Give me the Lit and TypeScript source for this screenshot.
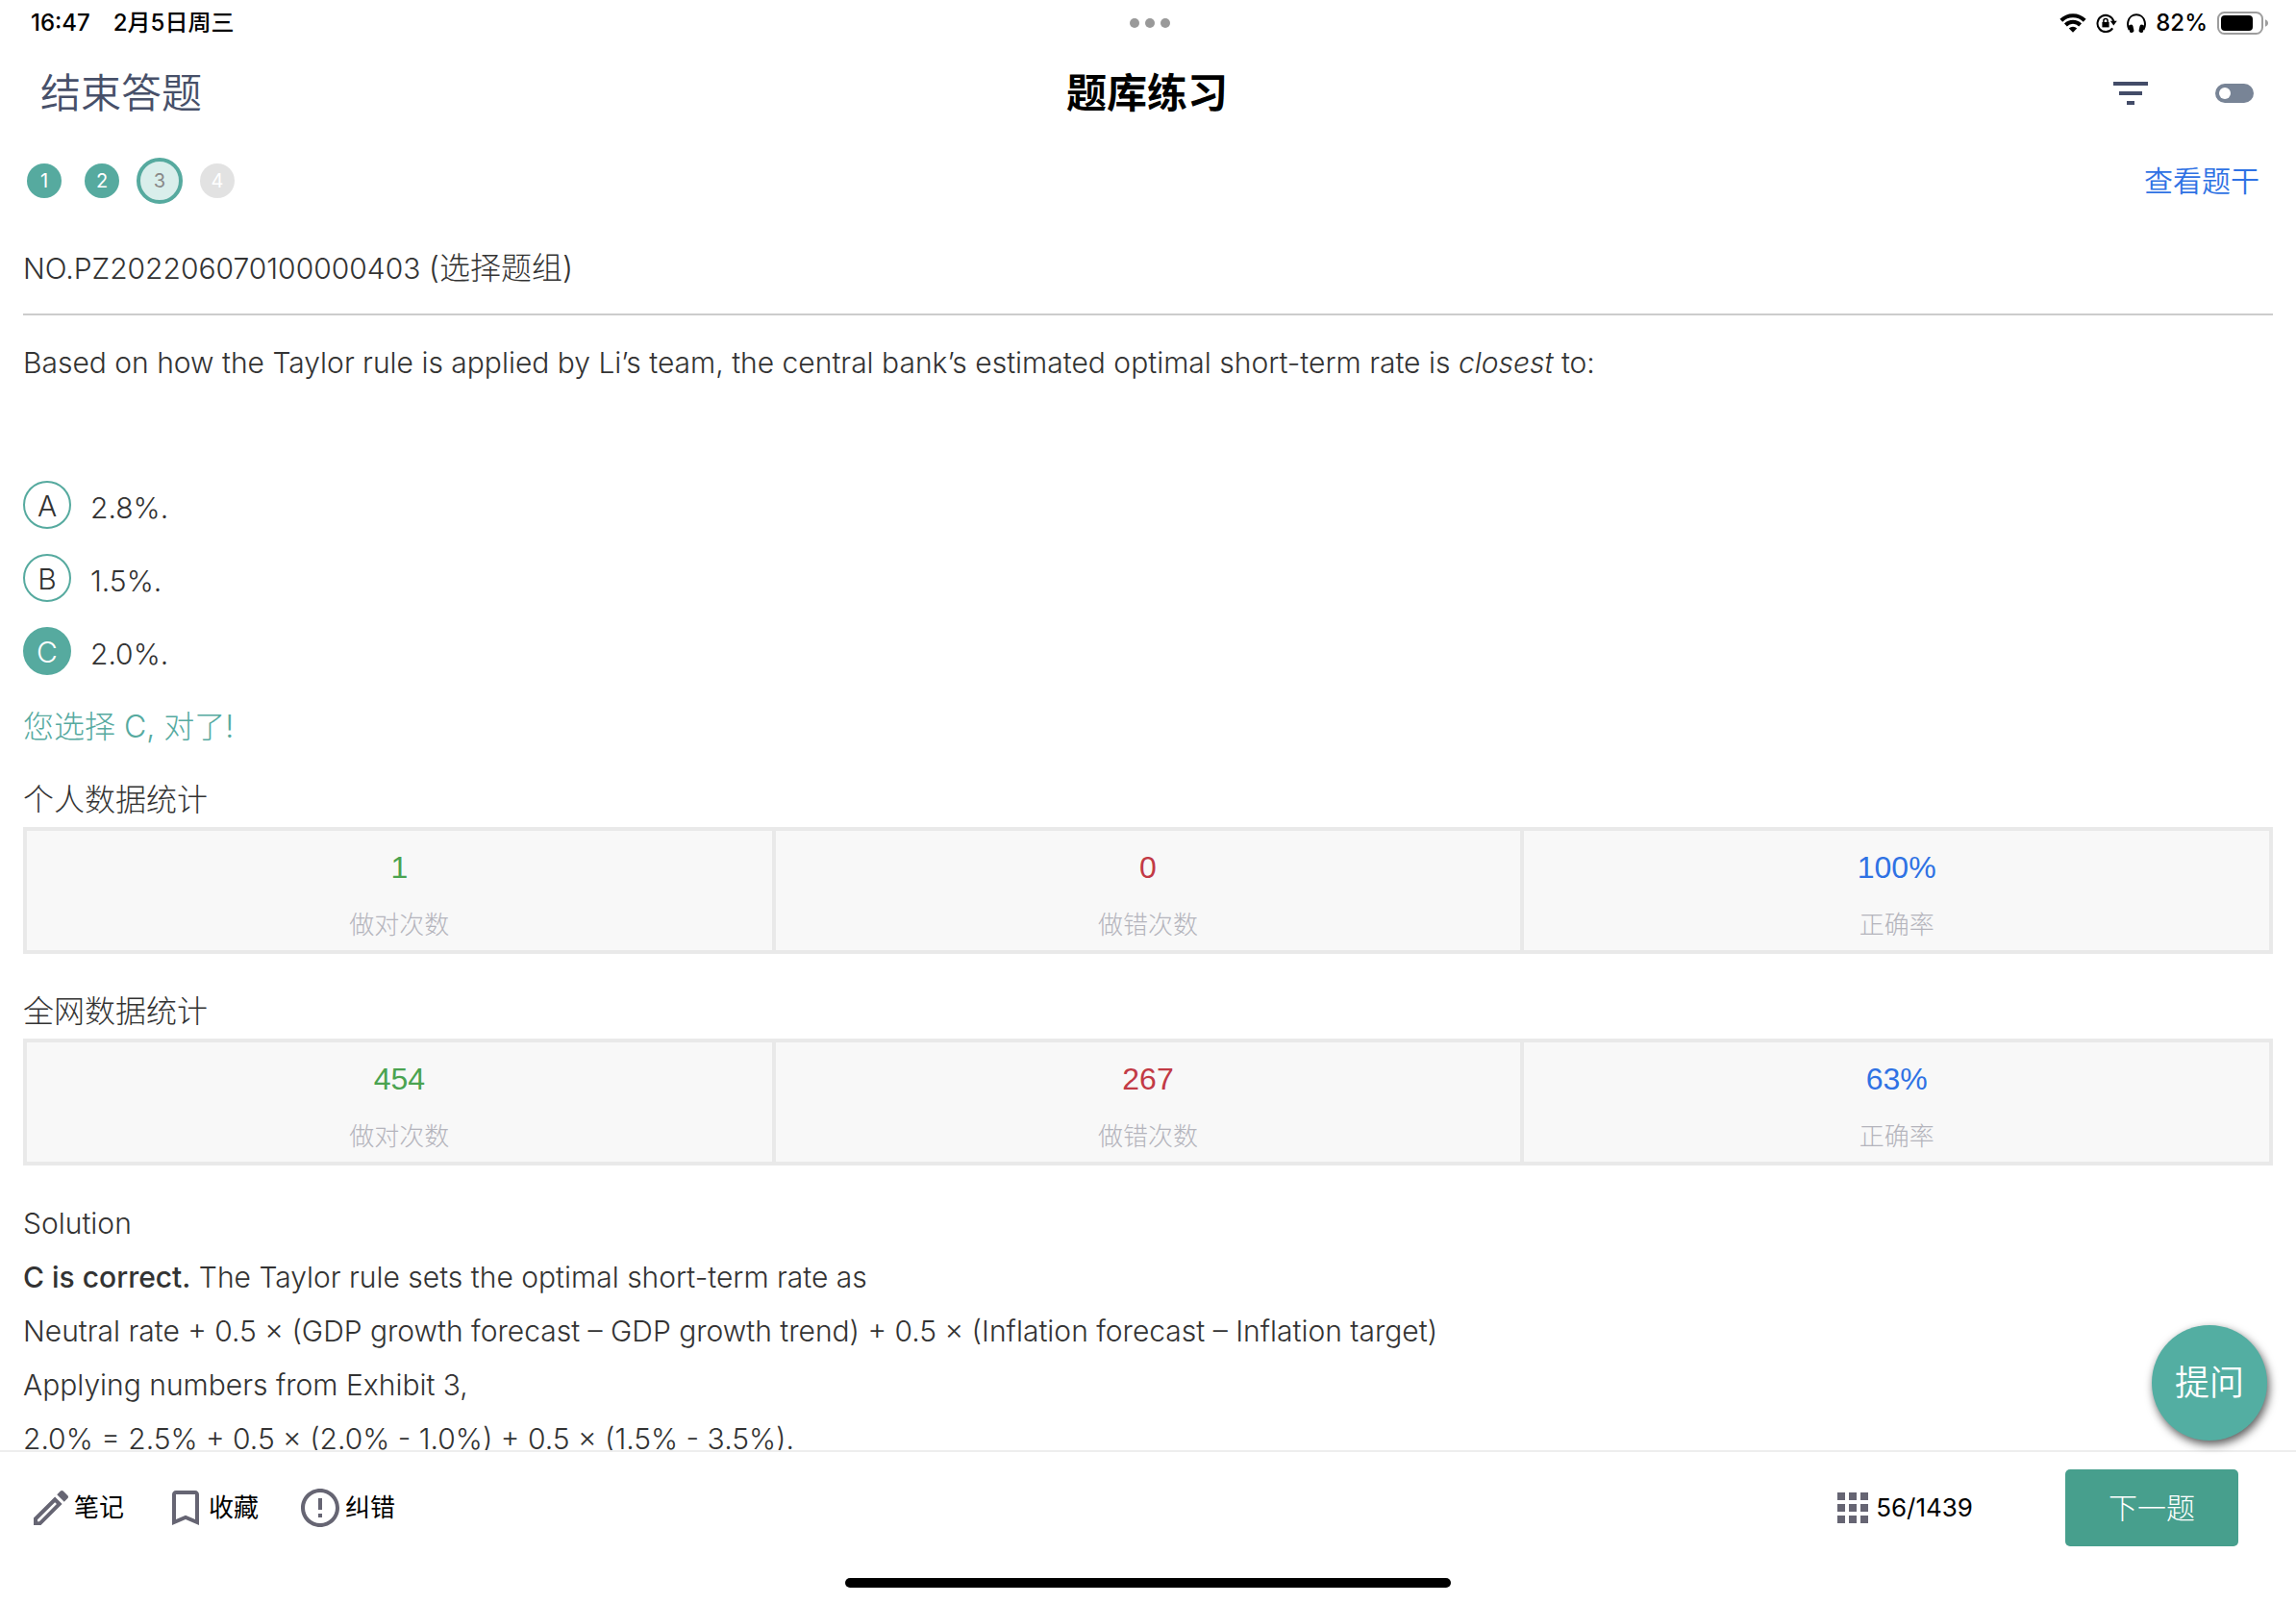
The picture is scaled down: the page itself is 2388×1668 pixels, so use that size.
import { LitElement, html, css, svg } from "lit";
import { customElement, property, state } from "lit/decorators.js";
import { classMap } from "lit/directives/class-map.js";

const wifiIcon = svg`<svg width="28" height="22" viewBox="0 0 28 22" aria-hidden="true">
  <g fill="none" stroke="#000" stroke-width="4">
    <path d="M1.8 8.2a17.4 17.4 0 0 1 24.4 0" />
    <path d="M6.4 13a10.8 10.8 0 0 1 15.2 0" />
  </g>
  <path d="M9.8 16.4a6 6 0 0 1 8.4 0L14 20.8z" />
</svg>`;

const rotationLockIcon = svg`<svg width="22" height="22" viewBox="0 0 22 22" aria-hidden="true">
  <path d="M18.4 9.2A8.6 8.6 0 1 0 17.2 16.4" fill="none" stroke="#000" stroke-width="2" />
  <path d="M14.8 8.8h7l-3.5 4.8z" />
  <path d="M6.4 10h7.2v5.4H6.4z" />
  <path d="M7.9 10.4V8.6a2.1 2.1 0 0 1 4.2 0v1.8" fill="none" stroke="#000" stroke-width="1.5" />
</svg>`;

const headphonesIcon = svg`<svg width="20" height="22" viewBox="0 0 20 22" aria-hidden="true">
  <path d="M2.6 18C.6 14.6.9 11.3 1.4 9.2a8.8 8.8 0 0 1 17.2 0c.5 2.1.8 5.4-1.2 8.8" fill="none" stroke="#000" stroke-width="2" />
  <rect x="2.4" y="12.6" width="4.6" height="8.4" rx="2" transform="rotate(-12 4.7 16.8)" />
  <rect x="13" y="12.6" width="4.6" height="8.4" rx="2" transform="rotate(12 15.3 16.8)" />
</svg>`;

const batteryIcon = svg`<svg width="54" height="24" viewBox="0 0 54 24" aria-hidden="true">
  <rect x="1" y="1" width="46" height="22" rx="6.5" fill="none" stroke="#9d9d9d" stroke-width="2" />
  <rect x="4" y="4" width="33" height="16" rx="4" />
  <path d="M50 8.2c2 .8 3 2.2 3 3.8s-1 3-3 3.8z" fill="#9d9d9d" />
</svg>`;

const filterIcon = svg`<svg width="36" height="24" viewBox="0 0 36 24" fill="#434c68" aria-hidden="true">
  <path d="M0 0h36v4H0zM6 10h24v4H6zM14 20h8v4h-8z" />
</svg>`;

const pencilIcon = svg`<svg width="36" height="36" viewBox="3 3 18 18" fill="#666573" aria-hidden="true">
  <path d="M3 17.25V21h3.75L17.81 9.94l-3.75-3.75L3 17.25zM5.92 19.08H5v-.92l9.06-9.06.92.92L5.92 19.08zM20.71 5.63l-2.34-2.34c-.2-.2-.45-.29-.71-.29s-.51.1-.7.29l-1.83 1.83 3.75 3.75 1.83-1.83c.39-.39.39-1.02 0-1.41z" />
</svg>`;

const bookmarkIcon = svg`<svg width="28" height="36" viewBox="5 3 14 18" fill="#666573" aria-hidden="true">
  <path d="M17 3H7c-1.1 0-2 .9-2 2v16l7-3 7 3V5c0-1.1-.9-2-2-2zm0 15l-5-2.18L7 18V5h10v13z" />
</svg>`;

const alertIcon = svg`<svg width="40" height="40" viewBox="2 2 20 20" fill="#666573" aria-hidden="true">
  <path d="M11 15h2v2h-2zM11 7h2v6h-2zM11.99 2C6.47 2 2 6.48 2 12s4.47 10 9.99 10C17.52 22 22 17.52 22 12S17.52 2 11.99 2zM12 20c-4.42 0-8-3.58-8-8s3.58-8 8-8 8 3.58 8 8-3.58 8-8 8z" />
</svg>`;

const gridIcon = svg`<svg width="32" height="32" viewBox="4 4 16 16" fill="#666573" aria-hidden="true">
  <path d="M4 8h4V4H4v4zm6 12h4v-4h-4v4zm-6 0h4v-4H4v4zm0-6h4v-4H4v4zm6 0h4v-4h-4v4zm6-10v4h4V4h-4zm-6 4h4V4h-4v4zm6 6h4v-4h-4v4zm0 6h4v-4h-4v4z" />
</svg>`;

interface Stats {
  right: string;
  wrong: string;
  rate: string;
}

@customElement("stats-table")
class StatsTable extends LitElement {
  @property({ attribute: false }) stats!: Stats;

  static styles = css`
    :host {
      display: block;
    }
    table {
      width: 100%;
      table-layout: fixed;
      border-collapse: separate;
      border-spacing: 4px;
      background: #e9e9e9;
    }
    td {
      padding: 17px 0 10px;
      background: #f8f8f8;
      text-align: center;
    }
    .value {
      font: 400 32px/42px "Liberation Sans", sans-serif;
    }
    .label {
      margin-top: 19px;
      font: 300 26px/36px "Noto Sans CJK SC", sans-serif;
      color: #b4b4bc;
    }
    .right {
      color: #4aa350;
    }
    .wrong {
      color: #c23a45;
    }
    .rate {
      color: #2f72e4;
    }
  `;

  render() {
    return html`<table>
      <tbody>
        <tr>
          <td>
            <div class="value right">${this.stats.right}</div>
            <div class="label">做对次数</div>
          </td>
          <td>
            <div class="value wrong">${this.stats.wrong}</div>
            <div class="label">做错次数</div>
          </td>
          <td>
            <div class="value rate">${this.stats.rate}</div>
            <div class="label">正确率</div>
          </td>
        </tr>
      </tbody>
    </table>`;
  }
}

@customElement("app-root")
class AppRoot extends LitElement {
  @state() private current = 3;
  @state() private selected = "C";

  private options = [
    { key: "A", text: "2.8%." },
    { key: "B", text: "1.5%." },
    { key: "C", text: "2.0%." },
  ];

  static styles = css`
    :host {
      display: flex;
      flex-direction: column;
      height: 100vh;
      overflow: hidden;
      position: relative;
      background: #fff;
      color: #333;
      font: 300 30px/56px Inter, "Noto Sans CJK SC", sans-serif;
    }
    h1,
    h2,
    p {
      margin: 0;
      font: inherit;
    }
    button {
      margin: 0;
      padding: 0;
      border: 0;
      background: none;
      color: inherit;
      font: inherit;
    }
    a {
      text-decoration: none;
    }
    svg {
      display: block;
      flex: none;
    }

    .status,
    .navbar {
      display: grid;
      grid-template-columns: 1fr auto 1fr;
      align-items: center;
      flex: none;
    }
    .status {
      height: 48px;
      padding: 0 28px 0 32px;
      color: #000;
      font-size: 24px;
      font-weight: 500;
      line-height: 32px;
    }
    .clock {
      display: flex;
      gap: 24px;
    }
    .dots {
      display: flex;
      gap: 6px;
    }
    .dot {
      width: 10px;
      height: 10px;
      border-radius: 50%;
      background: #999;
    }
    .indicators {
      display: flex;
      justify-content: flex-end;
      align-items: center;
      gap: 10px;
    }

    .navbar {
      box-sizing: border-box;
      height: 94px;
      padding: 3px 44px 0 42px;
    }
    .end {
      justify-self: start;
      color: #475069;
      font-size: 42px;
      font-weight: 350;
      line-height: 60px;
    }
    .title {
      color: #000;
      font-size: 42px;
      font-weight: 700;
      line-height: 60px;
    }
    .tools {
      display: flex;
      justify-content: flex-end;
      align-items: center;
      gap: 70px;
    }
    .switch {
      display: block;
      appearance: none;
      width: 40px;
      height: 20px;
      margin: 0;
      padding: 4px;
      border-radius: 10px;
      background: #788496;
    }
    .switch::before {
      content: "";
      display: block;
      width: 12px;
      height: 12px;
      border-radius: 50%;
      background: #fff;
    }

    .steps {
      display: flex;
      align-items: center;
      flex: none;
      height: 92px;
      padding: 0 38px 0 22px;
      gap: 12px;
    }
    .step {
      display: grid;
      place-items: center;
      width: 48px;
      height: 48px;
    }
    .bubble {
      box-sizing: border-box;
      width: 36px;
      height: 36px;
      border-radius: 50%;
      background: #56aa9f;
      color: #fff;
      font-size: 20px;
      font-weight: 400;
      line-height: 36px;
      text-align: center;
    }
    .bubble.pending {
      background: #e2e2e2;
    }
    .bubble.active {
      width: 48px;
      height: 48px;
      border: 4px solid #56aa9f;
      background: #d9eeeb;
      color: #888;
      line-height: 40px;
    }
    .stem {
      margin-left: auto;
      color: #2f72e4;
      font-weight: 350;
    }

    .content {
      flex: 1;
      min-height: 0;
      overflow: hidden;
      padding: 0 24px;
    }
    .number {
      padding: 17px 0 19px;
      border-bottom: 2px solid #ccc;
    }
    .kind {
      font-size: 32px;
    }
    .question {
      margin-top: 21px;
    }
    .options {
      margin: 82px 0 0;
      padding: 0;
      border: 0;
    }
    .option {
      display: grid;
      grid-template-columns: 50px 1fr;
      column-gap: 20px;
      align-items: center;
      height: 76px;
    }
    .radio {
      grid-area: 1 / 1;
      box-sizing: border-box;
      appearance: none;
      width: 50px;
      height: 50px;
      margin: 0;
      border: 2px solid #56aa9f;
      border-radius: 50%;
    }
    .radio:checked {
      background: #56aa9f;
    }
    .letter {
      grid-area: 1 / 1;
      z-index: 1;
      padding-top: 2px;
      text-align: center;
    }
    .radio:checked + .letter {
      color: #fff;
    }
    .answer {
      padding-top: 6px;
    }
    .feedback,
    .caption {
      font-size: 32px;
    }
    .feedback {
      margin-top: 13px;
      color: #56aa9f;
    }
    .caption {
      margin-top: 20px;
    }
    .network,
    .solution {
      margin-top: 32px;
    }
    .solution strong {
      font-weight: 500;
    }

    .ask {
      position: absolute;
      right: 30px;
      bottom: 170px;
      width: 120px;
      height: 120px;
      border-radius: 50%;
      background: #53aea2;
      box-shadow: 2px 4px 10px rgba(0, 0, 0, 0.65);
      color: #fff;
      font-size: 36px;
      font-weight: 350;
    }

    .footer {
      display: flex;
      align-items: center;
      flex: none;
      height: 116px;
      padding: 0 60px 0 35px;
      border-top: 2px solid #eee;
      color: #000;
      font-size: 26px;
      font-weight: 400;
    }
    .actions {
      display: flex;
      gap: 44px;
    }
    .action {
      display: flex;
      align-items: center;
      gap: 6px;
    }
    .action.mark {
      gap: 10px;
      margin-left: 6px;
    }
    .count {
      margin-left: auto;
      gap: 8px;
    }
    .next {
      width: 180px;
      height: 80px;
      margin-left: 96px;
      border-radius: 5px;
      background: #479f8d;
      color: #fff;
      font-size: 30px;
      font-weight: 300;
    }
    .home {
      flex: none;
      width: 630px;
      height: 10px;
      margin: 15px auto 17px;
      border-radius: 5px;
      background: #000;
    }
  `;

  private renderStep(n: number) {
    const classes = { bubble: true, active: n === this.current, pending: n > this.current };
    return html`<button class="step" @click=${() => (this.current = n)}>
      <span class=${classMap(classes)}>${n}</span>
    </button>`;
  }

  private renderOption(o: { key: string; text: string }) {
    return html`<label class="option">
      <input
        class="radio"
        type="radio"
        name="answer"
        .value=${o.key}
        .checked=${o.key === this.selected}
        @change=${() => (this.selected = o.key)}
      />
      <span class="letter">${o.key}</span>
      <span class="answer">${o.text}</span>
    </label>`;
  }

  render() {
    return html`
      <div class="status">
        <div class="clock"><span>16:47</span><span>2月5日周三</span></div>
        <div class="dots"><span class="dot"></span><span class="dot"></span><span class="dot"></span></div>
        <div class="indicators">
          ${wifiIcon} ${rotationLockIcon} ${headphonesIcon}
          <span>82%</span>
          ${batteryIcon}
        </div>
      </div>

      <header class="navbar">
        <button class="end">结束答题</button>
        <h1 class="title">题库练习</h1>
        <div class="tools">
          <button aria-label="筛选">${filterIcon}</button>
          <input class="switch" type="checkbox" role="switch" aria-label="模式" />
        </div>
      </header>

      <nav class="steps">
        ${[1, 2, 3, 4].map((n) => this.renderStep(n))}
        <a class="stem" href="#stem">查看题干</a>
      </nav>

      <main class="content">
        <p class="number">NO.PZ202206070100000403 <span class="kind">(选择题组)</span></p>
        <p class="question">
          Based on how the Taylor rule is applied by Li’s team, the central bank’s estimated optimal
          short-term rate is <em>closest</em> to:
        </p>
        <fieldset class="options" aria-label="选项">${this.options.map((o) => this.renderOption(o))}</fieldset>
        <p class="feedback">您选择 C, 对了!</p>

        <h2 class="caption">个人数据统计</h2>
        <stats-table .stats=${{ right: "1", wrong: "0", rate: "100%" }}></stats-table>
        <h2 class="caption network">全网数据统计</h2>
        <stats-table .stats=${{ right: "454", wrong: "267", rate: "63%" }}></stats-table>

        <section class="solution">
          <h2>Solution</h2>
          <p><strong>C is correct.</strong> The Taylor rule sets the optimal short-term rate as</p>
          <p>
            Neutral rate + 0.5 × (GDP growth forecast – GDP growth trend) + 0.5 × (Inflation forecast –
            Inflation target)
          </p>
          <p>Applying numbers from Exhibit 3,</p>
          <p>2.0% = 2.5% + 0.5 × (2.0% - 1.0%) + 0.5 × (1.5% - 3.5%).</p>
        </section>
      </main>

      <button class="ask">提问</button>

      <footer class="footer">
        <div class="actions">
          <button class="action">${pencilIcon}<span>笔记</span></button>
          <button class="action mark">${bookmarkIcon}<span>收藏</span></button>
          <button class="action">${alertIcon}<span>纠错</span></button>
        </div>
        <button class="action count">${gridIcon}<span>56/1439</span></button>
        <button class="next">下一题</button>
      </footer>
      <div class="home"></div>
    `;
  }
}
